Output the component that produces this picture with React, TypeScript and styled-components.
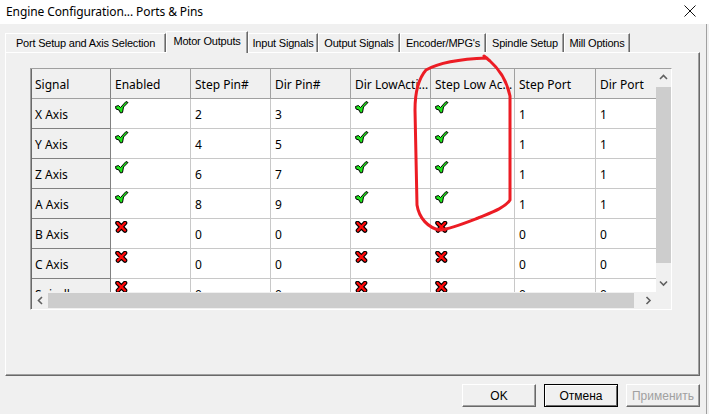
import React from 'react'
import styled, { createGlobalStyle } from 'styled-components'

const GlobalStyle = createGlobalStyle`
  html, body {
    margin: 0;
    padding: 0;
  }
  body {
    background: #f0f0f0;
    font-family: "Noto Sans", "Liberation Sans", sans-serif;
  }
`

type AxisRow = {
  name: string
  enabled: boolean
  step: number
  dir: number
  dirLow: boolean
  stepLow: boolean
  stepPort: number
  dirPort: number
}

const rows: AxisRow[] = [
  { name: 'X Axis', enabled: true, step: 2, dir: 3, dirLow: true, stepLow: true, stepPort: 1, dirPort: 1 },
  { name: 'Y Axis', enabled: true, step: 4, dir: 5, dirLow: true, stepLow: true, stepPort: 1, dirPort: 1 },
  { name: 'Z Axis', enabled: true, step: 6, dir: 7, dirLow: true, stepLow: true, stepPort: 1, dirPort: 1 },
  { name: 'A Axis', enabled: true, step: 8, dir: 9, dirLow: true, stepLow: true, stepPort: 1, dirPort: 1 },
  { name: 'B Axis', enabled: false, step: 0, dir: 0, dirLow: false, stepLow: false, stepPort: 0, dirPort: 0 },
  { name: 'C Axis', enabled: false, step: 0, dir: 0, dirLow: false, stepLow: false, stepPort: 0, dirPort: 0 },
  { name: 'Spindle', enabled: false, step: 0, dir: 0, dirLow: false, stepLow: false, stepPort: 0, dirPort: 0 },
]

const headers = ['Signal', 'Enabled', 'Step Pin#', 'Dir Pin#', 'Dir LowActi...', 'Step Low Ac...', 'Step Port', 'Dir Port']

const tabs = [
  { label: 'Port Setup and Axis Selection', width: 161 },
  { label: 'Motor Outputs', width: 82, active: true },
  { label: 'Input Signals', width: 70 },
  { label: 'Output Signals', width: 82 },
  { label: "Encoder/MPG's", width: 86 },
  { label: 'Spindle Setup', width: 78 },
  { label: 'Mill Options', width: 66 },
]

const Check = () => (
  <svg width="14" height="13" viewBox="0 0 14 13">
    <polygon
      points="0.5,5.5 3.5,4.5 5.5,6.5 11,0.5 13,1.5 8.5,6 7.5,11.5 5.5,12 4,9 1,8"
      fill="#1ee61a"
      stroke="#000"
      strokeWidth="1"
      strokeLinejoin="miter"
    />
  </svg>
)

const Cross = () => (
  <svg width="13" height="12" viewBox="0 0 13 12">
    <path d="M2.5 2 L10 9.5 M10 2 L3 9.5" stroke="#000" strokeWidth="4.6" strokeLinecap="round" fill="none" />
    <path d="M2.5 2 L10 9.5 M10 2 L3 9.5" stroke="#ff0a0a" strokeWidth="2.4" strokeLinecap="round" fill="none" />
  </svg>
)

const Chevron = ({ dir }: { dir: 'up' | 'down' | 'left' | 'right' }) => {
  const d = {
    up: 'M1 5 L4.5 1.5 L8 5',
    down: 'M1 1.5 L4.5 5 L8 1.5',
    left: 'M5 1 L1.5 4.5 L5 8',
    right: 'M1.5 1 L5 4.5 L1.5 8',
  }[dir]
  const horiz = dir === 'left' || dir === 'right'
  return (
    <svg width={horiz ? 7 : 9} height={horiz ? 9 : 7} viewBox={horiz ? '0 0 7 9' : '0 0 9 7'}>
      <path d={d} stroke="#606060" strokeWidth="1.6" fill="none" />
    </svg>
  )
}

const App = () => {
  const flag = (v: boolean) => (v ? <Check /> : <Cross />)

  return (
    <>
      <GlobalStyle />
      <Window>
        <TitleBar>
          <Title>Engine Configuration... Ports &amp; Pins</Title>
          <svg width="12" height="12" viewBox="0 0 12 12">
            <path d="M0.5 0.5 L11.5 11.5 M11.5 0.5 L0.5 11.5" stroke="#111" strokeWidth="1" />
          </svg>
        </TitleBar>

        <Body>
          <TabStrip>
            {tabs.map(t => (
              <Tab key={t.label} $w={t.width} $active={!!t.active}>
                {t.label}
              </Tab>
            ))}
          </TabStrip>

          <TabPage>
            <GridFrame>
              <GridInner>
                <GridTop>
                  <Viewport>
                    <GridRow>
                      {headers.map(h => (
                        <HeaderCell key={h} $first={h === 'Signal'}>{h}</HeaderCell>
                      ))}
                    </GridRow>
                    {rows.map(r => (
                      <GridRow key={r.name}>
                        <RowHeader>{r.name}</RowHeader>
                        <IconCell>{flag(r.enabled)}</IconCell>
                        <Cell>{r.step}</Cell>
                        <Cell>{r.dir}</Cell>
                        <IconCell>{flag(r.dirLow)}</IconCell>
                        <IconCell>{flag(r.stepLow)}</IconCell>
                        <Cell>{r.stepPort}</Cell>
                        <Cell>{r.dirPort}</Cell>
                      </GridRow>
                    ))}
                  </Viewport>
                  <VScroll>
                    <ArrowV><Chevron dir="up" /></ArrowV>
                    <VThumb />
                    <ArrowV><Chevron dir="down" /></ArrowV>
                  </VScroll>
                </GridTop>
                <GridBottom>
                  <HScroll>
                    <ArrowH><Chevron dir="left" /></ArrowH>
                    <HThumb />
                    <ArrowH><Chevron dir="right" /></ArrowH>
                  </HScroll>
                  <Corner />
                </GridBottom>
              </GridInner>
            </GridFrame>
          </TabPage>

          <ButtonRow>
            <DlgButton>OK</DlgButton>
            <DlgButton $focused>Отмена</DlgButton>
            <DlgButton disabled>Применить</DlgButton>
          </ButtonRow>
        </Body>

        <Annotation width="709" height="414" viewBox="0 0 709 414">
          <path
            d="M484 56 L490 61 C499 69 507 81 510 96 L510 200 C505 208 490 213 478 218 C465 223 450 229 440 230 C428 228 419 218 417 205 L415 110 C415 90 419 78 426 70 C440 62 460 59 487 58"
            stroke="#ec1c24"
            strokeWidth="3"
            fill="none"
            strokeLinecap="round"
            strokeLinejoin="round"
          />
        </Annotation>
      </Window>
    </>
  )
}

export default App

const Window = styled.div`
  position: relative;
  width: 709px;
  height: 414px;
  overflow: hidden;
  background: #f0f0f0;
  display: flex;
  flex-direction: column;
`

const TitleBar = styled.div`
  height: 24px;
  flex: none;
  background: #ffffff;
  display: flex;
  align-items: center;
  justify-content: space-between;
  padding: 0 13px 2px 6px;
  box-sizing: border-box;
`

const Title = styled.div`
  font-size: 12px;
  color: #000;
  letter-spacing: -0.1px;
`

const Body = styled.div`
  flex: 1;
  width: 707px;
  box-sizing: border-box;
  border-right: 1px solid #a0a0a0;
  padding: 0 6px 0 5px;
  display: flex;
  flex-direction: column;
`

const TabStrip = styled.div`
  height: 28px;
  display: flex;
  align-items: flex-end;
  position: relative;
  z-index: 1;
`

const Tab = styled.div<{ $w: number; $active: boolean }>`
  width: ${p => p.$w}px;
  height: ${p => (p.$active ? 22 : 19)}px;
  margin-bottom: ${p => (p.$active ? -1 : 0)}px;
  box-sizing: border-box;
  border-top: 1px solid #ffffff;
  border-left: 1px solid #ffffff;
  border-right: 1px solid #696969;
  box-shadow: inset -1px 0 0 #a0a0a0;
  background: #f0f0f0;
  font-family: "Liberation Sans", Arial, sans-serif;
  font-size: 11px;
  letter-spacing: -0.2px;
  color: #000;
  display: flex;
  align-items: flex-start;
  padding-top: ${p => (p.$active ? 3 : 3)}px;
  justify-content: center;
  white-space: nowrap;
`

const TabPage = styled.div`
  height: 324px;
  box-sizing: border-box;
  border-top: 1px solid #ffffff;
  border-left: 1px solid #ffffff;
  border-right: 1px solid #696969;
  border-bottom: 1px solid #696969;
  box-shadow: inset -1px -1px 0 #a0a0a0;
  padding: 15px 0 0 24px;
`

const GridFrame = styled.div`
  width: 642px;
  height: 242px;
  box-sizing: border-box;
  border-top: 1px solid #a0a0a0;
  border-left: 1px solid #a0a0a0;
  border-right: 1px solid #ffffff;
  border-bottom: 1px solid #ffffff;
`

const GridInner = styled.div`
  height: 100%;
  box-sizing: border-box;
  border-left: 1px solid #696969;
  display: flex;
  flex-direction: column;
`

const GridTop = styled.div`
  flex: 1;
  display: flex;
  min-height: 0;
`

const Viewport = styled.div`
  flex: 1;
  overflow: hidden;
  background: #f0f0f0;
`

const GridRow = styled.div`
  display: grid;
  grid-template-columns: 79px 80px 80px 80px 80px 84px 81px 80px;
  height: 30px;
`

const BaseCell = styled.div`
  box-sizing: border-box;
  height: 30px;
  font-size: 12px;
  color: #000;
  white-space: nowrap;
  overflow: hidden;
  display: flex;
  align-items: center;
  padding-left: 4px;
`

const HeaderCell = styled(BaseCell)<{ $first?: boolean }>`
  background: #f0f0f0;
  border-right: 1px solid ${p => (p.$first ? '#808080' : '#a0a0a0')};
  border-bottom: 1px solid #a0a0a0;
  padding-left: ${p => (p.$first ? 3 : 4)}px;
  padding-top: 1px;
`

const RowHeader = styled(BaseCell)`
  background: #f0f0f0;
  border-right: 1px solid #808080;
  border-bottom: 1px solid #808080;
  padding-left: 3px;
  padding-top: 1px;
`

const Cell = styled(BaseCell)`
  background: #ffffff;
  border-right: 1px solid #c8c8c8;
  border-bottom: 1px solid #c8c8c8;
  padding-top: 2px;
`

const IconCell = styled(Cell)`
  align-items: flex-start;
  padding-top: 2px;
`

const VScroll = styled.div`
  width: 15px;
  display: flex;
  flex-direction: column;
  background: #f0f0f0;
`

const ArrowV = styled.div`
  height: 17px;
  display: flex;
  align-items: center;
  justify-content: center;
`

const VThumb = styled.div`
  height: 176px;
  background: #cdcdcd;
  margin: 1px 0 auto;
`

const GridBottom = styled.div`
  height: 17px;
  display: flex;
`

const HScroll = styled.div`
  flex: 1;
  display: flex;
  background: #f0f0f0;
`

const ArrowH = styled.div`
  width: 16px;
  display: flex;
  align-items: center;
  justify-content: center;
`

const HThumb = styled.div`
  width: 586px;
  margin: 1px auto 1px 0;
  background: #cdcdcd;
`

const Corner = styled.div`
  width: 15px;
  background: #f0f0f0;
`

const ButtonRow = styled.div`
  display: flex;
  justify-content: flex-end;
  gap: 8px;
  padding-top: 8px;
`

const DlgButton = styled.button<{ $focused?: boolean }>`
  width: 74px;
  height: 23px;
  box-sizing: border-box;
  margin: 0;
  padding: 0;
  font-family: "Liberation Sans", Arial, sans-serif;
  font-size: 12px;
  color: #000;
  background: #f0f0f0;
  border: 1px solid;
  border-color: ${p => (p.$focused ? '#000' : '#ffffff #696969 #696969 #ffffff')};
  box-shadow: ${p => (p.$focused ? 'inset 1px 1px 0 #fff, inset -1px -1px 0 #696969' : 'inset -1px -1px 0 #a0a0a0')};

  &:disabled {
    color: #a0a0a0;
  }
`

const Annotation = styled.svg`
  position: absolute;
  left: 0;
  top: 0;
  pointer-events: none;
`
